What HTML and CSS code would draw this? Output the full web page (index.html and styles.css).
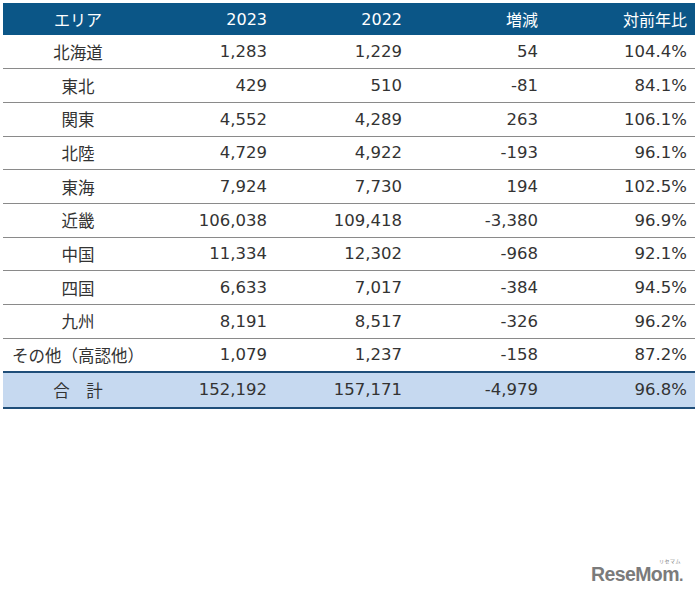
FILE: index.html
```html
<!DOCTYPE html>
<html lang="ja">
<head>
<meta charset="utf-8">
<link rel="stylesheet" href="styles.css">
</head>
<body>
<table class="tbl">
  <colgroup>
    <col class="c1"><col class="c2"><col class="c3"><col class="c4"><col class="c5">
  </colgroup>
  <thead>
    <tr><th class="area">エリア</th><th>2023</th><th>2022</th><th>増減</th><th>対前年比</th></tr>
  </thead>
  <tbody>
    <tr><td class="area">北海道</td><td>1,283</td><td>1,229</td><td>54</td><td>104.4%</td></tr>
    <tr><td class="area">東北</td><td>429</td><td>510</td><td>-81</td><td>84.1%</td></tr>
    <tr><td class="area">関東</td><td>4,552</td><td>4,289</td><td>263</td><td>106.1%</td></tr>
    <tr><td class="area">北陸</td><td>4,729</td><td>4,922</td><td>-193</td><td>96.1%</td></tr>
    <tr><td class="area">東海</td><td>7,924</td><td>7,730</td><td>194</td><td>102.5%</td></tr>
    <tr><td class="area">近畿</td><td>106,038</td><td>109,418</td><td>-3,380</td><td>96.9%</td></tr>
    <tr><td class="area">中国</td><td>11,334</td><td>12,302</td><td>-968</td><td>92.1%</td></tr>
    <tr><td class="area">四国</td><td>6,633</td><td>7,017</td><td>-384</td><td>94.5%</td></tr>
    <tr><td class="area">九州</td><td>8,191</td><td>8,517</td><td>-326</td><td>96.2%</td></tr>
    <tr class="last"><td class="area">その他（高認他）</td><td>1,079</td><td>1,237</td><td>-158</td><td>87.2%</td></tr>
    <tr class="total"><td class="area">合　計</td><td>152,192</td><td>157,171</td><td>-4,979</td><td>96.8%</td></tr>
  </tbody>
</table>
<div class="logo"><span class="logo-kana">リセマム</span><span class="logo-text">ReseMom</span><span class="logo-dot">.</span></div>
</body>
</html>
```
FILE: styles.css
```css
html, body {
  margin: 0;
  padding: 0;
  background: #ffffff;
}
body {
  padding: 3px 0 0 3px;
  font-family: "DejaVu Sans", "Noto Sans CJK JP", sans-serif;
  color: #333333;
  position: relative;
  width: 700px;
  height: 600px;
  box-sizing: border-box;
}
.tbl {
  border-collapse: collapse;
  table-layout: fixed;
  width: 692px;
  font-size: 16.5px;
}
.c1 { width: 150px; }
.c2 { width: 122px; }
.c3 { width: 135px; }
.c4 { width: 136px; }
.c5 { width: 149px; }
.tbl th {
  background: #0b5687;
  color: #ffffff;
  font-weight: normal;
  font-size: 16px;
  height: 32px;
  padding: 0 8px 0 0;
  text-align: right;
}
.tbl td {
  height: 33.7px;
  padding: 0 8px 0 0;
  text-align: right;
  border-bottom: 1px solid #8a8a8a;
  box-sizing: border-box;
}
.tbl .area {
  text-align: center;
  padding: 0;
}
.tbl tr.last td {
  border-bottom: 2px solid #1f4e79;
}
.tbl tr.total td {
  background: #c6d9f0;
  height: 36px;
  border-bottom: 2px solid #1f4e79;
}
.logo {
  position: absolute;
  left: 591px;
  top: 565px;
  color: #7b7b7b;
  font-family: "Liberation Sans", "Noto Sans CJK JP", sans-serif;
  font-weight: bold;
  line-height: 1;
}
.logo-text {
  font-size: 19.5px;
  letter-spacing: -0.6px;
}
.logo-dot {
  font-size: 16px;
}
.logo-kana {
  position: absolute;
  left: 68px;
  top: -6px;
  font-size: 5px;
  font-weight: normal;
  letter-spacing: 0.5px;
}
```
